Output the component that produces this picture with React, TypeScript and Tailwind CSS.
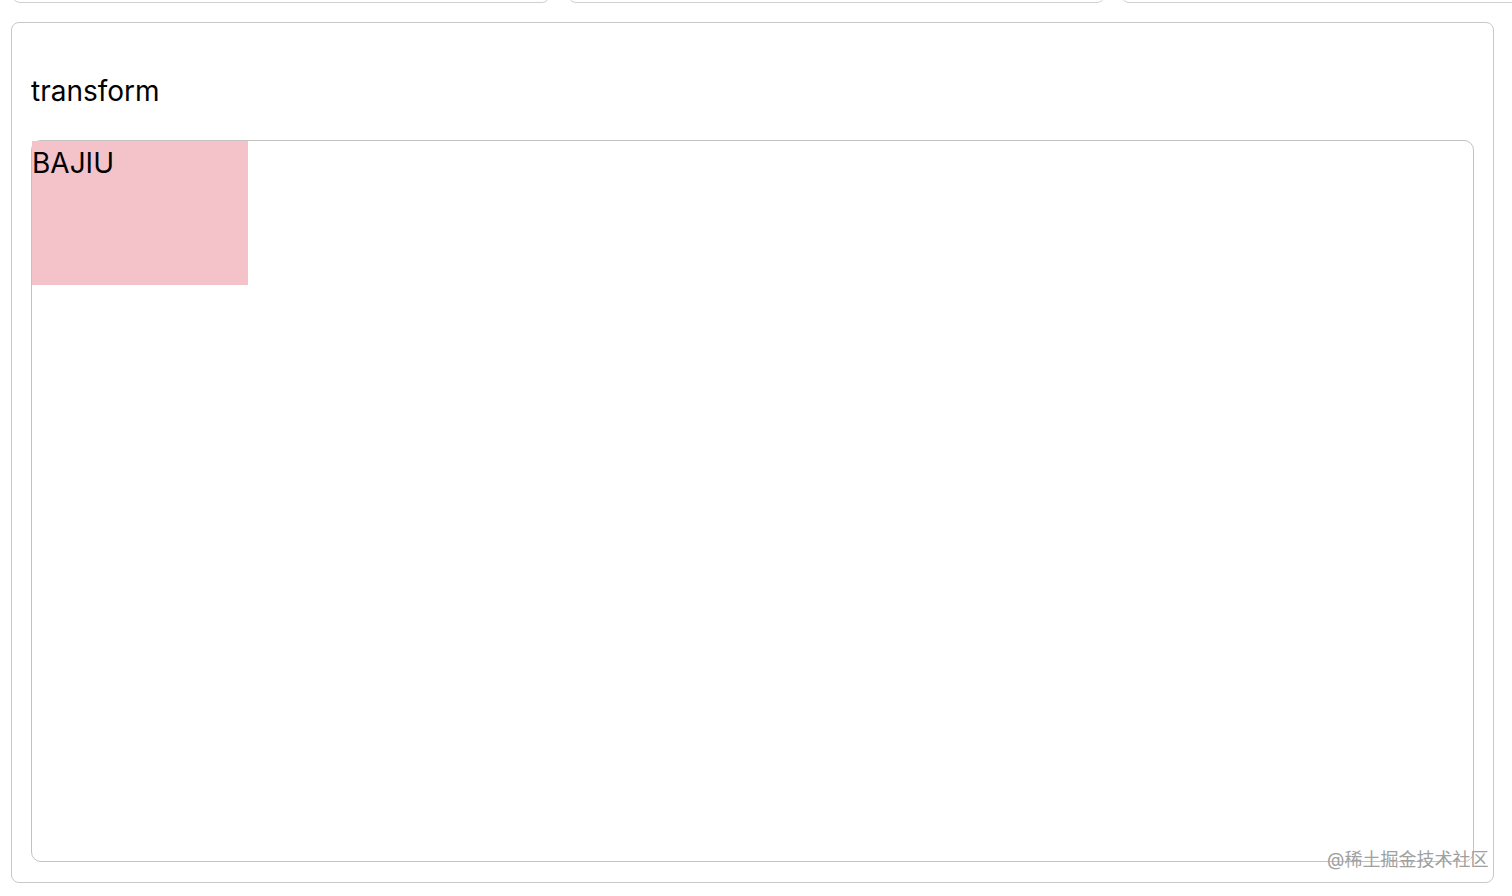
export default function App() {
  const font = { fontFamily: 'Inter, "Noto Sans CJK SC", sans-serif' };
  return (
    <div className="relative w-[1512px] h-[896px] overflow-hidden bg-white" style={font}>
      {/* cards above, cut off by the top edge */}
      <div className="flex ml-[12px] -mt-[40px]">
        <div className="w-[538px] h-[43px] shrink-0 rounded-lg border border-[#d0d0d0]" />
        <div className="ml-[18px] w-[537px] h-[43px] shrink-0 rounded-lg border border-[#d0d0d0]" />
        <div className="ml-[16px] w-[537px] h-[43px] shrink-0 rounded-lg border border-[#d0d0d0]" />
      </div>

      <div className="ml-[11px] mt-[19px] w-[1483px] h-[861px] rounded-lg border border-[#c8c8c8] px-[19px] pt-[50px]">
        <h2 className="text-[28px] leading-[36px] text-black">transform</h2>
        <div className="mt-[31px] w-[1443px] h-[722px] rounded-[10px] border border-[#c2c2c2]">
          <div className="w-[216px] h-[144px] bg-[#f4c3ca] pt-[4px] text-[28px] leading-[36px] text-black">BAJIU</div>
        </div>
      </div>

      <div className="absolute left-[1327px] top-[848px] text-[18px] leading-[24px] text-[#a0a0a0]">
        @稀土掘金技术社区
      </div>
    </div>
  );
}
